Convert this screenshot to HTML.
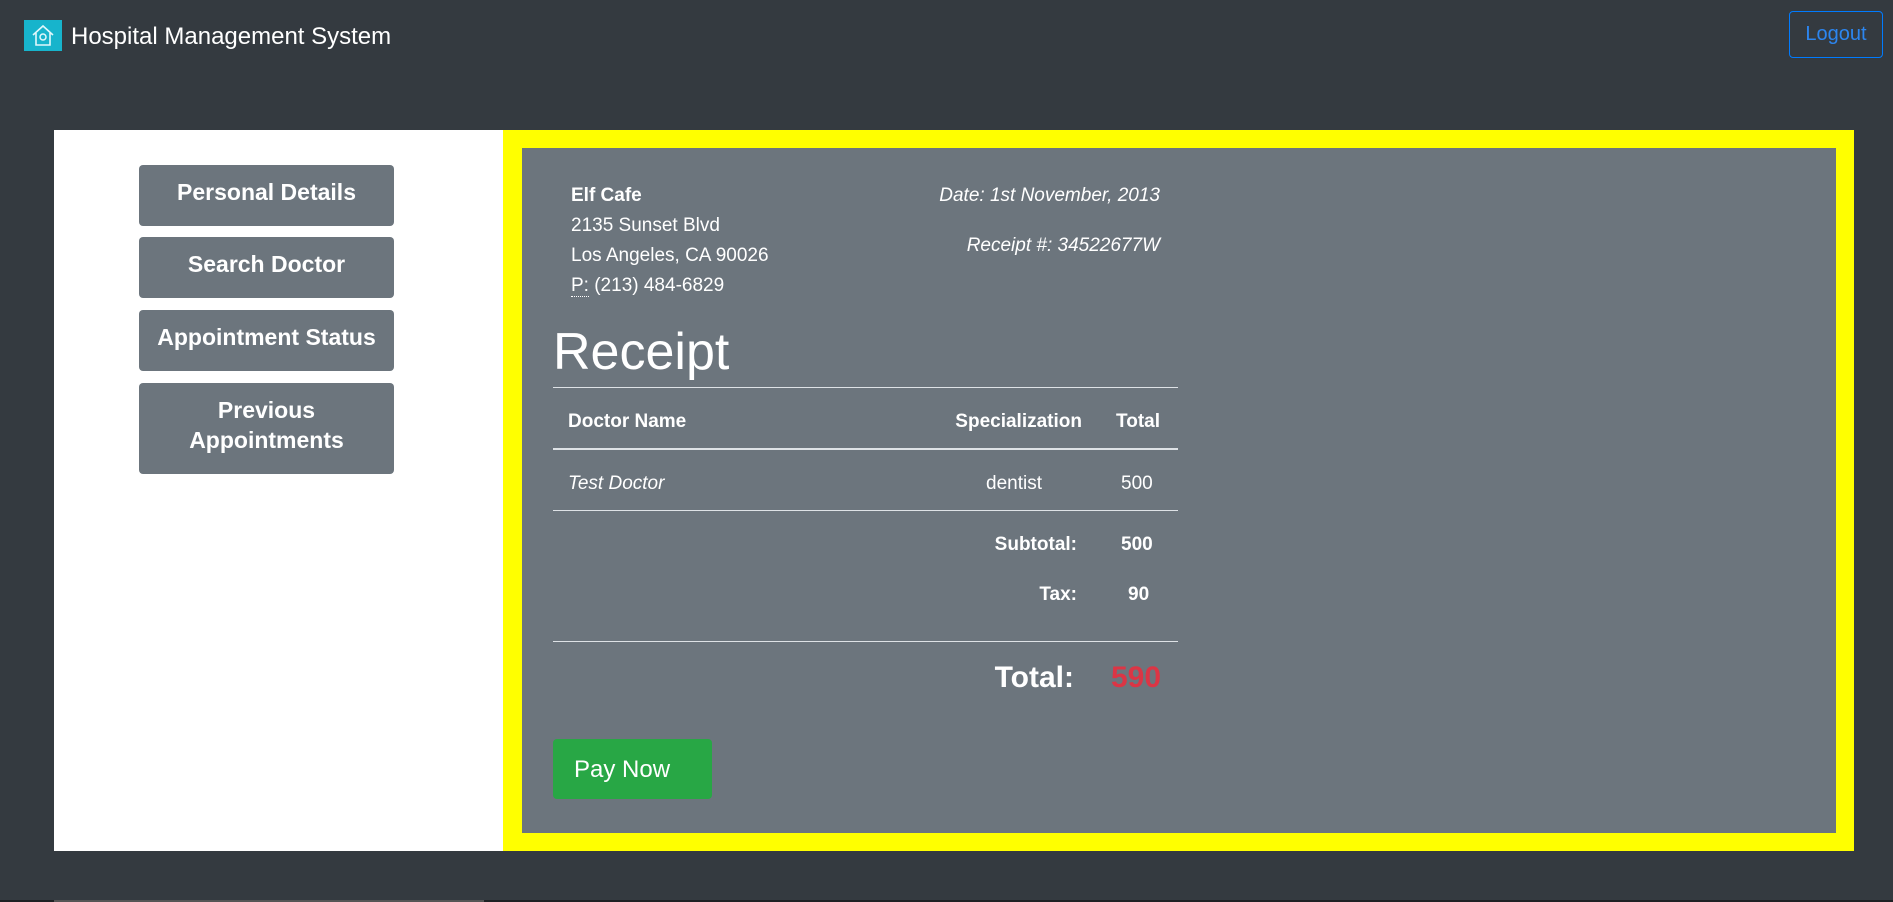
<!DOCTYPE html>
<html><head><meta charset="utf-8"><style>
*{box-sizing:border-box;margin:0;padding:0}
body{width:1893px;height:902px;background:#343a40;font-family:"Liberation Sans",sans-serif;position:relative;overflow:hidden;color:#fff}
.abs{position:absolute}
.logo{left:24px;top:20px;width:38px;height:31px;background:#17b4cc}
.title{left:71px;top:21px;font-size:24px;line-height:32px;color:#fff}
.logout{left:1789px;top:11px;width:94px;height:47px;border:1px solid #007bff;border-radius:4px;color:#2c86f0;font-size:20px;line-height:45px;text-align:center}
.white{left:54px;top:130px;width:449px;height:721px;background:#fff}
.yellow{left:503px;top:130px;width:1351px;height:721px;background:#ff0}
.gray{left:522px;top:148px;width:1314px;height:685px;background:#6c757d}
.btn{left:139px;width:255px;background:#6c757d;border-radius:4px;color:#fff;font-weight:bold;font-size:23px;text-align:center;display:flex;align-items:center;justify-content:center;line-height:30px;padding-bottom:7px}
.t{font-size:19px;line-height:30px;white-space:nowrap}
.r{text-align:right}
.hr{left:553px;width:625px;background:#dee2e6}
</style></head><body>
<div class="abs logo"><svg width="38" height="31" viewBox="0 0 38 31"><path d="M9 15 L19 6 L29 15 M12 13 V25 H26 V13" fill="none" stroke="#e0f7fb" stroke-width="1.6"/><circle cx="19" cy="17" r="3" fill="none" stroke="#e0f7fb" stroke-width="1.5"/></svg></div>
<div class="abs title">Hospital Management System</div>
<div class="abs logout">Logout</div>
<div class="abs white"></div>
<div class="abs yellow"></div>
<div class="abs gray"></div>
<div class="abs btn" style="top:165px;height:61px">Personal Details</div>
<div class="abs btn" style="top:237px;height:61px">Search Doctor</div>
<div class="abs btn" style="top:310px;height:61px">Appointment Status</div>
<div class="abs btn" style="top:383px;height:91px">Previous<br>Appointments</div>

<div class="abs t" style="left:571px;top:181px;font-weight:bold">Elf Cafe</div>
<div class="abs t" style="left:571px;top:211px">2135 Sunset Blvd</div>
<div class="abs t" style="left:571px;top:241px">Los Angeles, CA 90026</div>
<div class="abs t" style="left:571px;top:271px"><span style="border-bottom:1px dotted #fff">P:</span> (213) 484-6829</div>
<div class="abs t r" style="right:733px;top:181px;font-style:italic">Date: 1st November, 2013</div>
<div class="abs t r" style="right:733px;top:231px;font-style:italic">Receipt #: 34522677W</div>
<div class="abs" style="left:553px;top:320px;font-size:52px;line-height:64px;font-weight:500">Receipt</div>
<div class="abs hr" style="top:387px;height:1px"></div>
<div class="abs t" style="left:568px;top:407px;font-weight:bold">Doctor Name</div>
<div class="abs t r" style="right:811px;top:407px;font-weight:bold">Specialization</div>
<div class="abs t r" style="right:733px;top:407px;font-weight:bold">Total</div>
<div class="abs hr" style="top:448px;height:2px"></div>
<div class="abs t" style="left:568px;top:469px;font-style:italic">Test Doctor</div>
<div class="abs t" style="left:986px;top:469px">dentist</div>
<div class="abs t" style="left:1121px;top:469px">500</div>
<div class="abs hr" style="top:510px;height:1px"></div>
<div class="abs t r" style="right:816px;top:530px;font-weight:bold">Subtotal:</div>
<div class="abs t" style="left:1121px;top:530px;font-weight:bold">500</div>
<div class="abs t r" style="right:816px;top:580px;font-weight:bold">Tax:</div>
<div class="abs t" style="left:1128px;top:580px;font-weight:bold">90</div>
<div class="abs hr" style="top:641px;height:1px"></div>
<div class="abs r" style="right:819px;top:660px;font-size:30px;line-height:36px;font-weight:bold">Total:</div>
<div class="abs" style="left:1111px;top:660px;font-size:30px;line-height:36px;font-weight:bold;color:#dc3545">590</div>
<div class="abs" style="left:553px;top:739px;width:159px;height:60px;background:#28a745;border-radius:4px;font-size:24px;line-height:62px;padding-left:21px">Pay Now</div>
<div class="abs" style="left:0;top:900px;width:1893px;height:2px;background:#1e2124"></div>
<div class="abs" style="left:54px;top:900px;width:430px;height:2px;background:#555"></div>
</body></html>
